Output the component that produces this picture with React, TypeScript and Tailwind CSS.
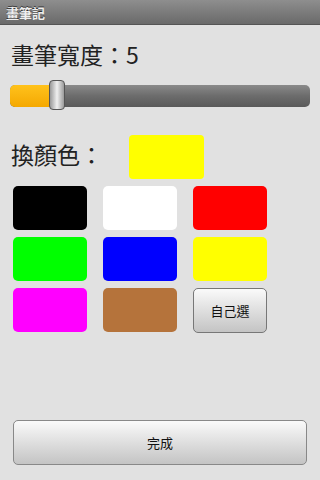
const swatches = [
	"#000000",
	"#ffffff",
	"#ff0000",
	"#00ff00",
	"#0000ff",
	"#ffff00",
	"#ff00ff",
	"#b5733b",
];

const font = {
	fontFamily: '"Noto Sans CJK TC", "Noto Sans", sans-serif',
};

export default function App() {
	return (
		<div
			className="w-[320px] h-[480px] bg-[#e1e1e1] flex flex-col overflow-hidden"
			style={font}
		>
			<div className="h-[25px] bg-gradient-to-b from-[#8e8e8e] to-[#6a6a6a] border-b border-[#555] flex items-center px-[6px]">
				<span className="text-[13px] font-bold text-[#eeeeee] leading-none [text-shadow:0_-1px_0_#333]">
					畫筆記
				</span>
			</div>

			<div className="px-[10px] pt-[14px]">
				<div className="text-[23px] leading-[30px] text-[#222] pl-[1px]">
					畫筆寬度：5
				</div>

				<div className="relative mt-[12px] h-[30px] flex items-center">
					<div className="w-full h-[22px] rounded-[5px] bg-gradient-to-b from-[#8a8a8a] via-[#6c6c6c] to-[#5a5a5a] overflow-hidden">
						<div className="w-[46px] h-full bg-gradient-to-b from-[#ffc21a] to-[#f4a800]" />
					</div>
					<div className="absolute left-[39px] top-[-1px] w-[16px] h-[30px] rounded-[4px] border border-[#555] bg-gradient-to-r from-[#9a9a9a] via-[#f0f0f0] to-[#9a9a9a]" />
				</div>

				<div className="flex items-start mt-[24px]">
					<div className="text-[23px] leading-[30px] text-[#222] w-[119px] pl-[1px] pt-[4px]">
						換顏色：
					</div>
					<div className="w-[75px] h-[44px] rounded-[4px] bg-[#ffff00]" />
				</div>

				<div className="grid grid-cols-[74px_74px_74px] gap-x-[16px] gap-y-[7px] mt-[7px] pl-[3px]">
					{swatches.map((c) => (
						<div
							key={c}
							className="h-[44px] rounded-[5px]"
							style={{ backgroundColor: c }}
						/>
					))}
					<button className="h-[45px] rounded-[5px] border border-[#777] bg-gradient-to-b from-[#fafafa] to-[#c4c4c4] text-[13px] text-[#111]">
						自己選
					</button>
				</div>
			</div>

			<div className="mt-auto px-[13px] pb-[15px]">
				<button className="w-full h-[45px] rounded-[5px] border border-[#888] bg-gradient-to-b from-[#fafafa] to-[#c4c4c4] text-[13px] text-[#111]">
					完成
				</button>
			</div>
		</div>
	);
}
